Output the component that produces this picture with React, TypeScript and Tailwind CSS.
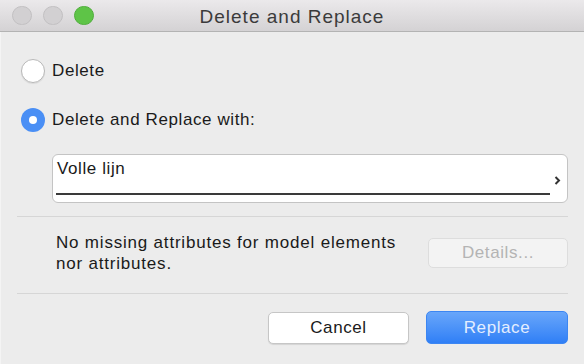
import React from "react";

export default function App() {
  return (
    <div
      className="w-[584px] h-[364px] bg-[#ececec] flex flex-col overflow-hidden"
      style={{ fontFamily: '"Liberation Sans", Arial, sans-serif' }}
    >
      {/* Title bar */}
      <div className="relative h-[32px] shrink-0 bg-gradient-to-b from-[#ebe9eb] to-[#d4d2d4] border-b border-[#b3b3b3] flex items-center justify-center">
        <div className="absolute left-[12px] top-[6px] flex gap-[11px]">
          <div className="w-[20px] h-[19px] rounded-full bg-[#d2d0d2] border border-[#c2c0c2]" />
          <div className="w-[20px] h-[19px] rounded-full bg-[#d2d0d2] border border-[#c2c0c2]" />
          <div className="w-[20px] h-[19px] rounded-full bg-[#5ec447] border border-[#4fae3b]" />
        </div>
        <span className="text-[19px] tracking-[1px] text-[#3b3b3b] leading-none mt-[1px]">Delete and Replace</span>
      </div>

      {/* Body */}
      <div className="flex-1 flex flex-col px-[16px] border-l border-[#f4f4f4] text-[17px] tracking-[0.6px] text-[#1a1a1a]">
        <div className="mt-[27px] h-[24px] flex items-center gap-[7px] pl-[4px]">
          <div className="w-[24px] h-[24px] rounded-full bg-white border border-[#b8b8b8] shadow-[0_1px_1px_rgba(0,0,0,0.08)]" />
          <span>Delete</span>
        </div>
        <div className="mt-[25px] h-[24px] flex items-center gap-[7px] pl-[4px]">
          <div className="w-[24px] h-[24px] rounded-full bg-[#4a8ff5] flex items-center justify-center">
            <div className="w-[8px] h-[8px] rounded-full bg-white" />
          </div>
          <span>Delete and Replace with:</span>
        </div>

        <div className="mt-[22px] ml-[35px] h-[49px] bg-white border border-[#c4c4c4] rounded-[6px] relative">
          <span className="absolute left-[4px] top-[3px] leading-[22px]">Volle lijn</span>
          <div className="absolute left-[3px] right-[17px] top-[38px] h-[2px] bg-[#3a3a3a]" />
          <svg className="absolute right-[6px] top-[21px]" width="7" height="9" viewBox="0 0 7 9">
            <path d="M1.5 1 L5 4.5 L1.5 8" stroke="#333" strokeWidth="2" fill="none" />
          </svg>
        </div>

        <div className="mt-[13px] h-px bg-[#d6d6d6]" />

        <div className="flex items-center mt-[15px]">
          <div className="ml-[39px] leading-[21px] tracking-[0.8px]">
            No missing attributes for model elements
            <br />
            nor attributes.
          </div>
          <div className="ml-auto w-[140px] h-[30px] rounded-[5px] bg-[#f3f3f3] border border-[#dddddd] flex items-center justify-center text-[#b4b4b4]">
            Details...
          </div>
        </div>

        <div className="mt-[19px] h-px bg-[#d6d6d6]" />

        <div className="flex justify-end items-center gap-[17px] mt-[17px]">
          <div className="w-[141px] h-[32px] rounded-[5px] bg-white border border-[#c6c6c6] shadow-[0_1px_1px_rgba(0,0,0,0.1)] flex items-center justify-center">
            Cancel
          </div>
          <div className="w-[142px] h-[33px] rounded-[5px] bg-gradient-to-b from-[#68a6fa] to-[#2f7ff6] border border-[#3c86f2] flex items-center justify-center text-[#e4eeff]">
            Replace
          </div>
        </div>
      </div>
    </div>
  );
}
